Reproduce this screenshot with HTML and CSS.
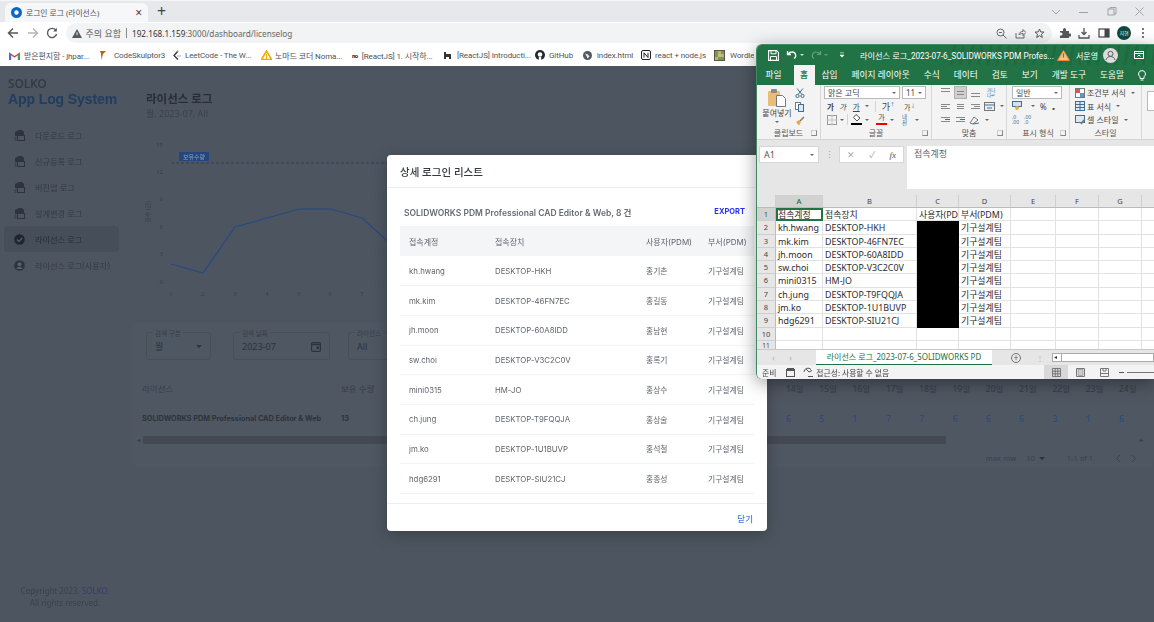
FILE: index.html
```html
<!DOCTYPE html>
<html lang="ko">
<head>
    <meta charset="UTF-8">
    <title>로그인 로그 (라이선스)</title>
    <link rel="stylesheet" href="styles.css">
</head>
<body>
    <!-- Browser chrome -->
    <header class="chrome">
        <div class="tabstrip">
            <div class="tab">
                <svg class="ico" width="11" height="11" viewBox="0 0 11 11"><circle cx="5.5" cy="5.5" r="5.5" fill="#0a66c8"/><circle cx="5.5" cy="5.5" r="2.2" fill="#fff"/></svg>
                <span class="tab-title">로그인 로그 (라이선스)</span>
                <span class="tab-close">×</span>
            </div>
            <span class="tab-new">+</span>
            <div class="win-ctrl">
                <svg width="12" height="12" viewBox="0 0 12 12"><path d="M2 4l4 4 4-4" fill="none" stroke="#a0a2a6"/></svg>
                <svg width="12" height="12" viewBox="0 0 12 12"><path d="M1 6.5h9" stroke="#a0a2a6"/></svg>
                <svg width="12" height="12" viewBox="0 0 12 12"><rect x="2" y="3" width="6" height="6" fill="none" stroke="#a0a2a6"/><path d="M4 3V1.500h6V8H8" fill="none" stroke="#a0a2a6"/></svg>
                <svg width="12" height="12" viewBox="0 0 12 12"><path d="M1.500 1.500l8 8m0-8l-8 8" stroke="#a0a2a6"/></svg>
            </div>
        </div>
        <div class="toolbar">
            <svg class="nav-btn" width="12" height="12" viewBox="0 0 12 12"><path d="M11 6H2M6 1.500L1.500 6 6 10.500" fill="none" stroke="#55585d" stroke-width="1.500"/></svg>
            <svg class="nav-btn" width="12" height="12" viewBox="0 0 12 12"><path d="M1 6h9M6 1.500L10.500 6 6 10.500" fill="none" stroke="#b4b6ba" stroke-width="1.500"/></svg>
            <svg class="nav-btn" width="12" height="12" viewBox="0 0 12 12"><path d="M10 3.500A4.600 4.600 0 1 0 10.600 7" fill="none" stroke="#55585d" stroke-width="1.400"/><path d="M10.800 .8v3.600H7.200z" fill="#55585d"/></svg>
            <div class="omnibox">
                <svg width="10" height="9" viewBox="0 0 10 9"><path d="M5 0l5 9H0z" fill="#55585d"/><path d="M5 3.200v3" stroke="#f1f3f4"/></svg>
                <span class="omni-warn">주의 요함</span>
                <span class="omni-sep"></span>
                <span class="omni-url"><b>192.168.1.159</b>:3000/dashboard/licenselog</span>
                <span class="omni-icons">
                    <svg width="11" height="11" viewBox="0 0 11 11"><circle cx="4.500" cy="4.500" r="3.500" fill="none" stroke="#66696e"/><path d="M7 7l3.500 3.500M3 4.500h3" stroke="#66696e"/></svg>
                    <svg width="11" height="11" viewBox="0 0 11 11"><path d="M1 5v5h8V7M4 7c0-2.500 2-3.500 4-3.500V1.500l3 3-3 3V5.500C6 5.500 5 6 4 7z" fill="none" stroke="#66696e"/></svg>
                    <svg width="11" height="11" viewBox="0 0 11 11"><path d="M5.500 1l1.300 3h3.200L7.500 6.200l.8 3.300-2.800-1.800-2.800 1.800.8-3.300L1 4h3.200z" fill="none" stroke="#55585d"/></svg>
                </span>
            </div>
            <div class="tool-icons">
                <svg width="12" height="12" viewBox="0 0 12 12"><path d="M1 4h3V2.500a1.500 1.500 0 0 1 3 0V4h3v2.500H11a1.500 1.500 0 0 1 0 3h-1V11H1V8.500h1a1.500 1.500 0 0 0 0-3H1z" fill="#55585d"/></svg>
                <svg width="12" height="12" viewBox="0 0 12 12"><path d="M6 1v6M3.500 5L6 7.500 8.500 5M1 8v3h10V8" fill="none" stroke="#55585d" stroke-width="1.300"/></svg>
                <svg width="12" height="12" viewBox="0 0 12 12"><rect x="1" y="2" width="10" height="8" fill="none" stroke="#44474c" stroke-width="1.200"/><rect x="6.500" y="2" width="4.500" height="8" fill="#44474c"/></svg>
                <span class="avatar">지현</span>
                <svg class="kebab" width="4" height="12" viewBox="0 0 4 12"><circle cx="2" cy="2" r="1.100" fill="#55585d"/><circle cx="2" cy="6" r="1.100" fill="#55585d"/><circle cx="2" cy="10" r="1.100" fill="#55585d"/></svg>
            </div>
        </div>
        <nav class="bookmarks">
            <a class="bm bm-mail"><svg width="11" height="9" viewBox="0 0 10 8"><path d="M0 1l5 3.500L10 1v1.500L5 6 0 2.500z" fill="#d8453a"/><path d="M8 8V3.300L10 1.500V8z" fill="#3a9d54"/><path d="M0 8V1.500l2 1.800V8z" fill="#4073d9"/></svg>받은편지함 - jhpar...</a>
            <a class="bm bm-cs"><svg width="8" height="10" viewBox="0 0 8 10"><path d="M1 1h6L4 4 2.500 10 2 4z" fill="#b5651d"/></svg>CodeSkulptor3</a>
            <a class="bm bm-lc"><svg width="9" height="11" viewBox="0 0 9 11"><path d="M6 1L2 5.500 6 9.500" fill="none" stroke="#333" stroke-width="1.300"/><path d="M5 6h4" stroke="#aaa"/><path d="M5 1.500L6 .5" stroke="#e8a33d" stroke-width="1.500"/></svg>LeetCode - The W...</a>
            <a class="bm bm-nomad"><svg width="11" height="10" viewBox="0 0 11 10"><path d="M5.500 1L10.500 9.500H.5z" fill="none" stroke="#f2a900" stroke-width="1.500"/><path d="M5.500 4v5" stroke="#f2a900"/></svg>노마드 코더 Noma...</a>
            <a class="bm bm-no"><b class="no-mark">no</b>[ReactJS] 1. 시작하...</a>
            <a class="bm bm-intro"><svg width="7" height="8" viewBox="0 0 7 8"><path d="M0 1h2v2h5v5H5V6H2v2H0z" fill="#333"/></svg>[ReactJS] Introducti...</a>
            <a class="bm bm-gh"><svg width="10" height="10" viewBox="0 0 10 10"><circle cx="5" cy="5" r="5" fill="#24292e"/><circle cx="5" cy="4.500" r="2.300" fill="#fff"/><path d="M3.800 10V7h2.400v3z" fill="#fff"/></svg>GitHub</a>
            <a class="bm bm-idx"><svg width="9" height="9" viewBox="0 0 9 9"><circle cx="4.500" cy="4.500" r="4.500" fill="#55585d"/><path d="M2 2.500l3 1 1.500 2-2 2-1-2.500z" fill="#eee"/></svg>index.html</a>
            <a class="bm bm-not"><svg width="10" height="10" viewBox="0 0 10 10"><rect x=".5" y=".5" width="9" height="9" rx="1.500" fill="#fff" stroke="#222"/><path d="M3 2.800v4.700M7 2.800v4.700M3 2.800l4 4.700" stroke="#222"/></svg>react + node.js</a>
            <a class="bm bm-wd"><span class="wordle-mark"><i></i><i></i><i></i><i></i><i></i><i></i><i></i><i></i><i></i></span>Wordle</a>
        </nav>
    </header>

    <!-- Dimmed app behind the dialog -->
    <div class="app">
        <aside class="sidebar">
            <div class="logo">
                <div class="logo-top">SOLKO</div>
                <div class="logo-sub">App Log System</div>
            </div>
            <ul class="menu">
                <li><svg class="menu-ico" width="11" height="12" viewBox="0 0 11 12"><path d="M1 3l4-2h3l2 2v4H1z" fill="#2d343e"/><rect x="3.500" y="6.500" width="7" height="5" fill="none" stroke="#2d343e"/><path d="M.5 9h2M.5 11h2" stroke="#2d343e"/></svg>다운로드 로그</li>
                <li><svg class="menu-ico" width="11" height="12" viewBox="0 0 11 12"><path d="M1 3l4-2h3l2 2v4H1z" fill="#2d343e"/><rect x="3.500" y="6.500" width="7" height="5" fill="none" stroke="#2d343e"/><path d="M.5 9h2M.5 11h2" stroke="#2d343e"/></svg>신규등록 로그</li>
                <li><svg class="menu-ico" width="11" height="12" viewBox="0 0 11 12"><path d="M1 3l4-2h3l2 2v4H1z" fill="#2d343e"/><rect x="3.500" y="6.500" width="7" height="5" fill="none" stroke="#2d343e"/><path d="M.5 9h2M.5 11h2" stroke="#2d343e"/></svg>버전업 로그</li>
                <li><svg class="menu-ico" width="11" height="12" viewBox="0 0 11 12"><path d="M1 3l4-2h3l2 2v4H1z" fill="#2d343e"/><rect x="3.500" y="6.500" width="7" height="5" fill="none" stroke="#2d343e"/><path d="M.5 9h2M.5 11h2" stroke="#2d343e"/></svg>설계변경 로그</li>
                <li class="active"><svg class="menu-ico" width="11" height="11" viewBox="0 0 11 11"><circle cx="5.500" cy="5.500" r="5.300" fill="#20262e"/><path d="M3 5.500l2 2 3.200-3.500" fill="none" stroke="#59616c" stroke-width="1.200"/></svg>라이선스 로그</li>
                <li><svg class="menu-ico" width="11" height="11" viewBox="0 0 11 11"><circle cx="5.500" cy="5.500" r="5.300" fill="#2d343e"/><circle cx="5.500" cy="4.300" r="2" fill="#59616c"/><path d="M2.500 9c.5-1.600 1.700-2.300 3-2.300s2.500.7 3 2.300z" fill="#59616c"/></svg>라이선스 로그(사용자)</li>
            </ul>
            <div class="copy">Copyright 2023. <span>SOLKO.</span><br>All rights reserved.</div>
        </aside>
        <main class="content">
            <h1 class="page-title">라이선스 로그</h1>
            <p class="page-sub">월, 2023-07, All</p>
            <svg class="chart" width="260" height="170" viewBox="0 0 260 170">
                <g class="grid-lines">
                    <path d="M38 16H260M38 43H260M38 70H260M38 98H260M38 125H260M38 153H260"/>
                </g>
                <path class="limit" d="M38 35H260"/>
                <rect class="limit-tag" x="46" y="24" width="30" height="9" rx="1"/>
                <text class="limit-text" x="61" y="31" text-anchor="middle">보유수량</text>
                <g class="axis">
                    <text x="30" y="19" text-anchor="end">15</text>
                    <text x="30" y="46" text-anchor="end">12</text>
                    <text x="30" y="73" text-anchor="end">9</text>
                    <text x="30" y="101" text-anchor="end">6</text>
                    <text x="30" y="128" text-anchor="end">3</text>
                    <text x="30" y="156" text-anchor="end">0</text>
                    <text x="38" y="168" text-anchor="middle">1</text>
                    <text x="70" y="168" text-anchor="middle">2</text>
                    <text x="102" y="168" text-anchor="middle">3</text>
                    <text x="134" y="168" text-anchor="middle">4</text>
                    <text x="166" y="168" text-anchor="middle">5</text>
                    <text x="197" y="168" text-anchor="middle">6</text>
                    <text x="229" y="168" text-anchor="middle">7</text>
                    <text transform="translate(17 84) rotate(-90)" text-anchor="middle">횟수 (건)</text>
                </g>
                <path class="series" d="M38 136L70 145 102 99 134 90 166 81 198 81 229 90 260 118"/>
            </svg>
            <section class="card">
                <div class="filters">
                    <div class="field f-type"><label>검색 구분</label><span>월</span><em class="caret"></em></div>
                    <div class="field f-date"><label>검색 날짜</label><span>2023-07</span>
                        <svg width="10" height="11" viewBox="0 0 10 11"><rect x=".6" y="1.600" width="8.800" height="8.800" rx="1" fill="none" stroke="#2d343d" stroke-width="1.200"/><path d="M.6 3.500h8.800" stroke="#2d343d" stroke-width="1.500"/><rect x="5.500" y="5.500" width="2.500" height="2.500" fill="#2d343d"/></svg>
                    </div>
                    <div class="field f-lic"><label>라이선스</label><span>All</span></div>
                </div>
                <table class="log-table">
                    <colgroup>
                        <col class="c-name"><col class="c-qty"><col class="c-gap">
                        <col span="11" class="c-day">
                    </colgroup>
                    <thead>
                        <tr><th>라이선스</th><th>보유 수량</th><th></th><th>14일</th><th>15일</th><th>16일</th><th>17일</th><th>18일</th><th>19일</th><th>20일</th><th>21일</th><th>22일</th><th>23일</th><th>24일</th></tr>
                    </thead>
                    <tbody>
                        <tr><td class="lic-name">SOLIDWORKS PDM Professional CAD Editor &amp; Web</td><td class="lic-name">13</td><td></td><td>6</td><td>5</td><td>1</td><td>7</td><td>7</td><td>6</td><td>6</td><td>6</td><td>3</td><td>1</td><td>6</td></tr>
                    </tbody>
                </table>
                <div class="hscroll"><span class="hs-arrow">◂</span><div class="hs-thumb"></div><span class="hs-arrow">▸</span></div>
                <div class="pager">
                    <span>max row</span><span class="pg-size">10 <em class="caret"></em></span><span class="pg-range">1-1 of 1</span>
                    <svg width="6" height="9" viewBox="0 0 6 9"><path d="M5 1L1.500 4.500 5 8" fill="none" stroke="#3a424c"/></svg>
                    <svg width="6" height="9" viewBox="0 0 6 9"><path d="M1 1l3.500 3.500L1 8" fill="none" stroke="#3a424c"/></svg>
                </div>
            </section>
        </main>
    </div>

    <!-- Detail dialog -->
    <div class="modal">
        <div class="modal-title">상세 로그인 리스트</div>
        <div class="modal-body">
            <div class="modal-head">
                <span>SOLIDWORKS PDM Professional CAD Editor &amp; Web, 8 건</span>
                <a class="export">EXPORT</a>
            </div>
            <table class="detail-table">
                <colgroup><col class="d1"><col class="d2"><col class="d3"><col class="d4"></colgroup>
                <thead>
                    <tr><th>접속계정</th><th>접속장치</th><th>사용자(PDM)</th><th>부서(PDM)</th></tr>
                </thead>
                <tbody>
                    <tr><td>kh.hwang</td><td>DESKTOP-HKH</td><td>홍기촌</td><td>기구설계팀</td></tr>
                    <tr><td>mk.kim</td><td>DESKTOP-46FN7EC</td><td>홍길동</td><td>기구설계팀</td></tr>
                    <tr><td>jh.moon</td><td>DESKTOP-60A8IDD</td><td>홍남현</td><td>기구설계팀</td></tr>
                    <tr><td>sw.choi</td><td>DESKTOP-V3C2C0V</td><td>홍록기</td><td>기구설계팀</td></tr>
                    <tr><td>mini0315</td><td>HM-JO</td><td>홍상수</td><td>기구설계팀</td></tr>
                    <tr><td>ch.jung</td><td>DESKTOP-T9FQQJA</td><td>홍상술</td><td>기구설계팀</td></tr>
                    <tr><td>jm.ko</td><td>DESKTOP-1U1BUVP</td><td>홍석철</td><td>기구설계팀</td></tr>
                    <tr><td>hdg6291</td><td>DESKTOP-SIU21CJ</td><td>홍종성</td><td>기구설계팀</td></tr>
                </tbody>
            </table>
        </div>
        <div class="modal-foot"><a class="close-link">닫기</a></div>
    </div>

    <!-- Excel window on top -->
    <div class="excel">
        <div class="xl-title">
            <div class="xl-pattern"></div>
            <svg class="xl-save" width="11" height="11" viewBox="0 0 11 11"><path d="M.6.6h8l1.800 1.800v8H.6z" fill="none" stroke="#fff" stroke-width="1.100"/><path d="M3 .8v3h5v-3M2.500 10V6.500h6V10" fill="none" stroke="#fff"/></svg>
            <svg class="xl-undo" width="12" height="10" viewBox="0 0 12 10"><path d="M1.500 1v3.500H5M2 4.200C3 2.800 4.500 2 6 2a3.500 3.500 0 0 1 2 6.500" fill="none" stroke="#fff" stroke-width="1.300"/></svg>
            <em class="xl-drop"></em>
            <svg class="xl-redo" width="12" height="10" viewBox="0 0 12 10"><path d="M10.500 1v3.500H7M10 4.200C9 2.800 7.500 2 6 2a3.500 3.500 0 0 0-2 6.500" fill="none" stroke="#66a080" stroke-width="1.200"/></svg>
            <em class="xl-drop dim"></em>
            <svg class="xl-custom" width="6" height="6" viewBox="0 0 6 6"><path d="M1 .8h4M1 3h4L3 5.200z" fill="#fff" stroke="#fff" stroke-width=".6"/></svg>
            <span class="xl-file">라이선스 로그_2023-07-6_SOLIDWORKS PDM Profes...</span>
            <svg class="xl-warn" width="13" height="11" viewBox="0 0 13 11"><path d="M6.500 .5l6 10H.5z" fill="#f6c08a" stroke="#e68a2e"/><path d="M6.500 3.500v4" stroke="#b3541e" stroke-width="1.200"/></svg>
            <span class="xl-user">서운영</span>
            <svg class="xl-avatar" width="15" height="15" viewBox="0 0 15 15"><circle cx="7.500" cy="7.500" r="7.500" fill="#dcdcdc"/><circle cx="7.500" cy="5.800" r="2.500" fill="none" stroke="#5c5c5c"/><path d="M3 12c.6-2.500 2.500-3.500 4.500-3.500S11.400 9.500 12 12" fill="none" stroke="#5c5c5c"/></svg>
            <svg class="xl-display" width="10" height="8" viewBox="0 0 10 8"><rect x=".5" y=".5" width="9" height="7" fill="none" stroke="#fff"/><path d="M.5 2.500h9M3.500 5.500L5 4l1.500 1.500" fill="none" stroke="#fff"/></svg>
        </div>
        <div class="xl-tabs">
            <span>파일</span><span class="on">홈</span><span>삽입</span><span>페이지 레이아웃</span><span>수식</span><span>데이터</span><span>검토</span><span>보기</span><span>개발 도구</span><span>도움말</span>
            <svg class="xl-bulb" width="8" height="11" viewBox="0 0 8 11"><path d="M4 .6a3.400 3.400 0 0 1 2 6.200V8.500H2V6.800A3.400 3.400 0 0 1 4 .6zM2.500 10h3" fill="none" stroke="#fff"/></svg>
        </div>
        <div class="ribbon">
            <div class="rb-group g-clip">
                <div class="rb-main clip-main">
                    <div class="paste">
                        <svg width="20" height="18" viewBox="0 0 20 18"><rect x="1" y="2" width="12" height="15" rx="1" fill="#e9bd77"/><rect x="4" y="0" width="6" height="4" rx="1" fill="#8a8a8a"/><path d="M9.500 6.500h6l3 3v8h-9z" fill="#fff" stroke="#777"/></svg>
                        <span>붙여넣기</span><em class="xl-caret"></em>
                    </div>
                    <div class="clip-tools">
                        <svg width="10" height="10" viewBox="0 0 10 10"><path d="M2 .5l5 6M8 .5l-5 6" stroke="#3f6e96"/><circle cx="2.500" cy="8" r="1.600" fill="none" stroke="#3f6e96"/><circle cx="7.500" cy="8" r="1.600" fill="none" stroke="#3f6e96"/></svg>
                        <svg width="12" height="10" viewBox="0 0 12 10"><rect x=".5" y=".5" width="5" height="7" fill="#fff" stroke="#777"/><rect x="3.500" y="2.500" width="5" height="7" fill="#dce8f3" stroke="#3f6e96"/></svg>
                        <svg width="10" height="10" viewBox="0 0 10 10"><path d="M5 5l4-4" stroke="#777" stroke-width="1.500"/><path d="M1 6l3-2 2 2-2 3.500z" fill="#dfa94c"/></svg>
                    </div>
                </div>
                <div class="rb-label">클립보드<i class="launch"></i></div>
            </div>
            <div class="rb-group g-font">
                <div class="rb-main font-main">
                    <div class="rb-row"><span class="select sel-font">맑은 고딕<em class="xl-caret"></em></span><span class="select sel-size">11<em class="xl-caret"></em></span></div>
                    <div class="rb-row r2"><b>가</b><i>가</i><u>가</u><em class="xl-caret"></em><span class="rb-sep"></span><span class="big">가<sup>↑</sup></span><span class="small">가<sup>↓</sup></span></div>
                    <div class="rb-row r3">
                        <svg width="10" height="10" viewBox="0 0 10 10"><rect x=".5" y=".5" width="9" height="9" fill="none" stroke="#9a9a9a"/><path d="M5 .5v9M.5 5h9" stroke="#c6c6c6"/></svg><em class="xl-caret"></em><span class="rb-sep"></span>
                        <span class="color-btn black"><svg width="10" height="7" viewBox="0 0 10 7"><path d="M4 .5l4 3.500-3 3-3.500-3.500z" fill="#fff" stroke="#555"/></svg></span><em class="xl-caret"></em>
                        <span class="color-btn red">가</span><em class="xl-caret"></em><span class="phon">내천</span><em class="xl-caret"></em>
                    </div>
                </div>
                <div class="rb-label">글꼴<i class="launch"></i></div>
            </div>
            <div class="rb-group g-align">
                <div class="rb-main align-main">
                    <div class="rb-row">
                        <span class="al"><s></s><s></s></span><span class="al on mid"><s></s><s></s></span><span class="al bot"><s></s><s></s></span><span class="wrap">가나<br>다↵</span>
                    </div>
                    <div class="rb-row">
                        <span class="al h l"><s></s><s></s><s></s></span><span class="al h c"><s></s><s></s><s></s></span><span class="al h r"><s></s><s></s><s></s></span>
                        <svg width="11" height="9" viewBox="0 0 11 9"><rect x=".5" y=".5" width="10" height="8" fill="#eee" stroke="#777"/><path d="M.5 3h10M3 6h5" stroke="#3f6e96"/></svg><em class="xl-caret"></em>
                    </div>
                    <div class="rb-row">
                        <span class="al h ind"><s></s><s></s><s></s></span><span class="al h ind"><s></s><s></s><s></s></span>
                        <svg width="11" height="10" viewBox="0 0 11 10"><path d="M1 8l4-6 4 3-5 4z" fill="none" stroke="#777"/><path d="M4 9l6-1" stroke="#3f6e96"/></svg><em class="xl-caret"></em>
                    </div>
                </div>
                <div class="rb-label">맞춤<i class="launch"></i></div>
            </div>
            <div class="rb-group g-num">
                <div class="rb-main num-main">
                    <div class="rb-row"><span class="select sel-num">일반<em class="xl-caret"></em></span></div>
                    <div class="rb-row">
                        <svg width="11" height="10" viewBox="0 0 11 10"><rect x=".5" y=".5" width="9" height="5" fill="#cfe3f5" stroke="#3f6e96"/><circle cx="5" cy="7" r="2" fill="#e3b23c"/></svg><em class="xl-caret"></em><span class="pct">%</span><span class="pct">❟</span>
                    </div>
                    <div class="rb-row num-inc"><span>.0<br>.00</span><span>.00<br>.0</span></div>
                </div>
                <div class="rb-label">표시 형식<i class="launch"></i></div>
            </div>
            <div class="rb-group g-style">
                <div class="rb-main style-main">
                    <div class="sty"><svg width="10" height="10" viewBox="0 0 10 10"><rect x=".5" y=".5" width="9" height="9" fill="#fff" stroke="#777"/><rect x="1" y="1" width="4" height="4" fill="#d55"/><rect x="5" y="5" width="4" height="4" fill="#59c"/></svg>조건부 서식<em class="xl-caret"></em></div>
                    <div class="sty"><svg width="10" height="10" viewBox="0 0 10 10"><rect x=".5" y=".5" width="9" height="9" fill="#dce8f3" stroke="#3f6e96"/><path d="M.5 3.500h9M.5 6.500h9M5 .5v9" stroke="#3f6e96"/></svg>표 서식<em class="xl-caret"></em></div>
                    <div class="sty"><svg width="10" height="10" viewBox="0 0 10 10"><rect x=".5" y=".5" width="9" height="7" fill="#dce8f3" stroke="#3f6e96"/><path d="M6 9l3-4" stroke="#777" stroke-width="1.500"/></svg>셀 스타일<em class="xl-caret"></em></div>
                </div>
                <div class="rb-label">스타일</div>
            </div>
            <div class="rb-group g-more"><span class="more-box"></span></div>
        </div>
        <div class="formula">
            <div class="name-box">A1<em class="xl-caret"></em></div>
            <span class="fx-dots">⋮</span>
            <div class="fx-btns"><span>✕</span><span>✓</span><i>fx</i></div>
            <div class="fx-input">접속계정</div>
        </div>
        <div class="sheet">
            <div class="col-heads">
                <span class="corner"></span><span class="sel">A</span><span>B</span><span>C</span><span>D</span><span>E</span><span>F</span><span>G</span><span></span>
            </div>
            <div class="cells">
                <span class="rh sel">1</span><span class="cur">접속계정</span><span>접속장치</span><span class="nowrap">사용자(PD</span><span>부서(PDM)</span><span></span><span></span><span></span><span></span>
                <span class="rh">2</span><span>kh.hwang</span><span>DESKTOP-HKH</span><span class="blk"></span><span>기구설계팀</span><span></span><span></span><span></span><span></span>
                <span class="rh">3</span><span>mk.kim</span><span>DESKTOP-46FN7EC</span><span class="blk"></span><span>기구설계팀</span><span></span><span></span><span></span><span></span>
                <span class="rh">4</span><span>jh.moon</span><span>DESKTOP-60A8IDD</span><span class="blk"></span><span>기구설계팀</span><span></span><span></span><span></span><span></span>
                <span class="rh">5</span><span>sw.choi</span><span>DESKTOP-V3C2C0V</span><span class="blk"></span><span>기구설계팀</span><span></span><span></span><span></span><span></span>
                <span class="rh">6</span><span>mini0315</span><span>HM-JO</span><span class="blk"></span><span>기구설계팀</span><span></span><span></span><span></span><span></span>
                <span class="rh">7</span><span>ch.jung</span><span>DESKTOP-T9FQQJA</span><span class="blk"></span><span>기구설계팀</span><span></span><span></span><span></span><span></span>
                <span class="rh">8</span><span>jm.ko</span><span>DESKTOP-1U1BUVP</span><span class="blk"></span><span>기구설계팀</span><span></span><span></span><span></span><span></span>
                <span class="rh">9</span><span>hdg6291</span><span>DESKTOP-SIU21CJ</span><span class="blk"></span><span>기구설계팀</span><span></span><span></span><span></span><span></span>
                <span class="rh">10</span><span></span><span></span><span></span><span></span><span></span><span></span><span></span><span></span>
                <span class="rh last">11</span><span></span><span></span><span></span><span></span><span></span><span></span><span></span><span></span>
            </div>
        </div>
        <div class="sheet-tabs">
            <span class="st-nav">‹</span><span class="st-nav">›</span>
            <span class="st-tab">라이선스 로그_2023-07-6_SOLIDWORKS PD</span>
            <span class="st-add">+</span>
            <span class="st-dots">⋮</span>
            <div class="st-scroll"><span>◂</span></div>
        </div>
        <div class="status">
            <span class="ready">준비</span>
            <svg class="st-macro" width="9" height="9" viewBox="0 0 9 9"><rect x=".5" y="1.500" width="8" height="7" fill="none" stroke="#555"/><rect x="1" y="0" width="7" height="3" fill="#555"/></svg>
            <svg class="st-acc" width="11" height="10" viewBox="0 0 11 10"><path d="M1 5a4 4 0 0 1 7-2.500M5 9.500h5M3 2l3 3 3-1.500" fill="none" stroke="#555"/></svg>
            <span>접근성: 사용할 수 없음</span>
            <div class="view-btns">
                <span class="on"><svg width="9" height="9" viewBox="0 0 9 9"><path d="M.5.500h8v8h-8zM3.200.5v8M5.800.5v8M.5 3.200h8M.5 5.800h8" fill="none" stroke="#555" stroke-width=".7"/></svg></span>
                <span><svg width="9" height="9" viewBox="0 0 9 9"><path d="M.5.500h8v8h-8z" fill="none" stroke="#777"/><rect x="2" y="1.500" width="5" height="6" fill="#ccc" stroke="#777" stroke-width=".5"/></svg></span>
                <span><svg width="9" height="9" viewBox="0 0 9 9"><path d="M.5.500h8v8h-8zM.5 5.500h8M3 .5v2.500h3V.5" fill="none" stroke="#777"/></svg></span>
            </div>
            <span class="zoom-minus"></span><span class="zoom-track"></span>
        </div>
    </div>
</body>
</html>
```

FILE: styles.css
```css
/* Basic reset */
* {
    box-sizing: border-box;
    margin: 0;
    padding: 0;
}
html, body {
    width: 1154px;
    height: 622px;
    overflow: hidden;
}
body {
    position: relative;
    font-family: "Noto Sans", "Noto Sans CJK KR", sans-serif;
    background-color: #4d5560;
    color: #333;
}
em, i {
    font-style: normal;
}
svg {
    flex: none;
}

/* Browser chrome */
.chrome {
    height: 66px;
    background: #fff;
}
.tabstrip {
    display: flex;
    align-items: flex-end;
    height: 22px;
    background: #e7e8eb;
    border-top: 1px solid #f5f5f5;
    padding-left: 5px;
}
.tab {
    display: flex;
    align-items: center;
    width: 143px;
    height: 19px;
    padding: 0 6px;
    gap: 4px;
    background: #f6f7f8;
    border-radius: 6px 6px 0 0;
    font-size: 7.800px;
    color: #555;
}
.tab-title {
    flex: 1;
}
.tab-close {
    font-size: 12px;
    color: #444;
}
.tab-new {
    margin: 0 0 1px 9px;
    font-size: 16px;
    line-height: 19px;
    color: #444;
}
.win-ctrl {
    display: flex;
    align-items: center;
    gap: 16px;
    margin-left: auto;
    height: 20px;
    padding-right: 8px;
}
.toolbar {
    display: flex;
    align-items: center;
    height: 22px;
    padding-left: 7px;
}
.nav-btn {
    margin-right: 7.500px;
}
.omnibox {
    display: flex;
    align-items: center;
    width: 986px;
    height: 20px;
    padding: 0 7px 0 6px;
    background: #f1f3f4;
    border-radius: 10px;
    font-size: 9px;
    color: #666;
}
.omni-warn {
    margin-left: 4px;
    color: #5a5d62;
}
.omni-sep {
    width: 1px;
    height: 10px;
    margin: 0 5px;
    background: #888;
}
.omni-url {
    font-size: 8.200px;
}
.omni-url b {
    font-weight: 400;
    color: #333;
}
.omni-icons {
    display: flex;
    gap: 8px;
    margin-left: auto;
}
.tool-icons {
    display: flex;
    align-items: center;
    gap: 7.500px;
    margin-left: 7px;
}
.kebab {
    margin-left: 2px;
}
.avatar {
    width: 14px;
    height: 14px;
    border-radius: 50%;
    background: #0d4a40;
    color: #fff;
    font-size: 5px;
    line-height: 14px;
    text-align: center;
}
.bookmarks {
    display: flex;
    align-items: center;
    height: 22px;
    padding-left: 9px;
    font-family: "Roboto", "Noto Sans CJK KR", sans-serif;
    font-size: 8px;
    letter-spacing: -.1px;
    color: #50535a;
    white-space: nowrap;
    overflow: hidden;
}
.bm {
    display: flex;
    align-items: center;
    flex: none;
    gap: 4px;
    overflow: hidden;
}
.bm-mail { width: 90px; }
.bm-cs { width: 73px; gap: 7px; }
.bm-lc { width: 89px; }
.bm-nomad { width: 91px; gap: 3px; }
.bm-no { width: 92px; }
.bm-intro { width: 91px; gap: 6px; }
.bm-gh { width: 48px; }
.bm-idx { width: 58px; gap: 5px; }
.bm-not { width: 73px; }
.bm-wd { width: 40px; gap: 5px; }
.no-mark {
    font-size: 6px;
    letter-spacing: -.5px;
    color: #222;
}
.wordle-mark {
    display: grid;
    grid-template-columns: repeat(3, 3px);
    grid-auto-rows: 3px;
    gap: 0;
    border: 1px solid #555;
}
.wordle-mark i {
    background: #7a9a4a;
}
.wordle-mark i:nth-child(2), .wordle-mark i:nth-child(6), .wordle-mark i:nth-child(7) {
    background: #c9b458;
}
.wordle-mark i:nth-child(5) {
    background: #bbb;
}

/* Dimmed app */
.app {
    display: flex;
    height: 556px;
    filter: blur(.4px);
}
.sidebar {
    position: relative;
    width: 133px;
    flex: none;
    padding: 12px 4px 0;
}
.logo {
    padding-left: 4px;
}
.logo-top {
    font-size: 12px;
    line-height: 12px;
    font-weight: 600;
    color: #333b46;
    letter-spacing: -.2px;
}
.logo-sub {
    font-size: 14px;
    line-height: 18px;
    font-weight: 700;
    font-family: "Liberation Sans", sans-serif;
    color: #213d60;
    white-space: nowrap;
    letter-spacing: -.1px;
}
.menu {
    list-style: none;
    margin-top: 14px;
}
.menu li {
    display: flex;
    align-items: center;
    width: 115px;
    height: 26px;
    padding-left: 10px;
    gap: 10px;
    font-size: 8.200px;
    color: #343b45;
    border-radius: 4px;
    white-space: nowrap;
}
.menu li.active {
    background: #464e59;
    color: #272e37;
}
.copy {
    position: absolute;
    left: 0;
    right: 3px;
    top: 519px;
    font-size: 8px;
    line-height: 12px;
    text-align: center;
    color: #3a424c;
}
.copy span {
    color: #3d3a66;
}
.content {
    flex: 1;
    min-width: 0;
    padding-top: 25px;
}
.page-title {
    margin-left: 13px;
    font-size: 11.500px;
    line-height: 16px;
    color: #272e38;
}
.page-sub {
    margin-left: 13px;
    font-size: 9px;
    line-height: 14px;
    color: #3a424c;
}
.chart {
    display: block;
    margin-top: 7px;
}
.grid-lines path {
    stroke: #4a525c;
    stroke-width: 1;
    stroke-dasharray: 1 3;
}
.limit {
    stroke: #333f52;
    stroke-dasharray: 3 2;
}
.limit-tag {
    fill: #24467f;
}
.limit-text {
    font-size: 6px;
    fill: #8fa2bd;
}
.axis text {
    font-size: 6px;
    fill: #38404a;
}
.series {
    fill: none;
    stroke: #254a84;
    stroke-width: 1.200;
}
.card {
    position: relative;
    margin-top: 25px;
    height: 144px;
    background: #4f5762;
    border-radius: 6px;
    padding-top: 9px;
}
.filters {
    display: flex;
    height: 28px;
    margin-left: 13px;
}
.field {
    position: relative;
    display: flex;
    align-items: center;
    justify-content: space-between;
    height: 28px;
    padding: 0 8px;
    border: 1px solid #474f59;
    border-radius: 3px;
    font-size: 9px;
    color: #2d343d;
}
.field label {
    position: absolute;
    top: -5px;
    left: 6px;
    padding: 0 2px;
    background: #4f5762;
    font-size: 6.500px;
    color: #363e48;
}
.f-type { width: 65px; }
.f-date { width: 97px; margin-left: 22px; }
.f-lic { width: 80px; margin-left: 18px; }
.caret {
    display: inline-block;
    border: 3px solid transparent;
    border-top-color: #2d343d;
    border-bottom: 0;
}
.log-table {
    width: 1019.300px;
    margin-top: 12px;
    border-collapse: collapse;
    table-layout: fixed;
    font-size: 8.500px;
}
.c-name { width: 208px; }
.c-qty { width: 50px; }
.c-gap { width: 395px; }
.c-day { width: 33.300px; }
.log-table th {
    height: 32px;
    font-weight: 400;
    text-align: left;
    color: #363e48;
    padding-left: 0;
    white-space: nowrap;
}
.log-table th:first-child, .log-table td:first-child {
    padding-left: 9px;
}
.log-table td {
    height: 32px;
    padding-bottom: 3px;
    color: #254a84;
    white-space: nowrap;
}
.log-table td.lic-name {
    font-family: "Inter", "Liberation Sans", sans-serif;
    font-size: 7.300px;
    font-weight: 700;
    color: #2d343d;
}
.hscroll {
    display: flex;
    align-items: center;
    height: 8px;
    font-size: 6px;
    color: #333a44;
}
.hs-arrow {
    width: 10px;
    text-align: center;
}
.hs-arrow:last-child {
    margin-left: 190px;
}
.hs-thumb {
    width: 803px;
    height: 8px;
    background: #434a54;
}
.pager {
    display: flex;
    justify-content: flex-end;
    align-items: center;
    gap: 10px;
    height: 12px;
    margin-top: 8px;
    padding-right: 17px;
    font-size: 7.500px;
    color: #3a424c;
}
.pg-range {
    margin: 0 12px 0 12px;
}
.pg-size .caret {
    margin-left: 2px;
    vertical-align: middle;
}

/* Detail dialog */
.modal {
    position: absolute;
    left: 387px;
    top: 155px;
    width: 380px;
    height: 376px;
    display: flex;
    flex-direction: column;
    background: #fff;
    border-radius: 4px;
    box-shadow: 0 4px 16px rgba(0, 0, 0, .25);
    font-family: "Inter", "Noto Sans CJK KR", sans-serif;
}
.modal-title {
    height: 33px;
    padding: 9px 13px 0;
    font-size: 10.500px;
    font-weight: 500;
    color: #333a42;
    border-bottom: 1px solid #edeef0;
}
.modal-body {
    flex: 1;
    padding: 0 13px;
}
.modal-head {
    display: flex;
    justify-content: space-between;
    align-items: center;
    height: 38px;
    padding: 9px 9px 0 4px;
    font-size: 8.500px;
    font-weight: 600;
    color: #666c75;
}
.export {
    font-size: 7.500px;
    font-weight: 700;
    color: #2a30f0;
}
.detail-table {
    width: 354px;
    border-collapse: collapse;
    table-layout: fixed;
    font-size: 7.800px;
    color: #5f656e;
}
.d1 { width: 95px; }
.d2 { width: 151px; }
.d3 { width: 62px; }
.d4 { width: 46px; }
.detail-table th {
    height: 30px;
    background: #f4f5f7;
    font-size: 8px;
    font-weight: 400;
    text-align: left;
    color: #5f656e;
    white-space: nowrap;
}
.detail-table th:first-child, .detail-table td:first-child {
    padding-left: 9px;
}
.detail-table td {
    height: 29.700px;
    border-bottom: 1px solid #f2f3f4;
    white-space: nowrap;
}
.modal-foot {
    display: flex;
    justify-content: flex-end;
    align-items: center;
    height: 28px;
    padding-right: 14px;
    border-top: 1px solid #edeef0;
    font-size: 8.500px;
}
.close-link {
    color: #3d7de0;
    font-weight: 500;
}

/* Excel window */
.excel {
    position: absolute;
    left: 756px;
    top: 44px;
    width: 398px;
    height: 335px;
    display: flex;
    flex-direction: column;
    background: #e6e6e6;
    border: 1px solid #3f8a62;
    border-right: 0;
    border-radius: 6px 0 0 6px;
    box-shadow: 0 4px 18px rgba(0, 0, 0, .38);
    font-family: "Noto Sans", "Noto Sans CJK KR", sans-serif;
    color: #333;
}
.xl-title {
    position: relative;
    display: flex;
    align-items: center;
    flex: none;
    height: 20px;
    background: #217346;
    color: #fff;
    font-family: "Roboto", "Noto Sans CJK KR", sans-serif;
    font-size: 8.200px;
    border-radius: 5px 0 0 0;
    overflow: hidden;
}
.xl-pattern {
    position: absolute;
    top: 0;
    left: 190px;
    width: 210px;
    height: 40px;
    background: repeating-linear-gradient(100deg, transparent 0 6px, rgba(0, 0, 0, .07) 6px 9px);
}
.xl-save { margin-left: 11px; position: relative; }
.xl-undo { margin-left: 7px; position: relative; }
.xl-drop {
    margin-left: 2px;
    border: 2px solid transparent;
    border-top-color: #cfe0d7;
    border-bottom: 0;
}
.xl-drop.dim { border-top-color: #66a080; }
.xl-redo { margin-left: 6px; }
.xl-custom { margin-left: 11px; }
.xl-file { margin-left: 15px; width: 197px; flex: none; white-space: nowrap; position: relative; }
.xl-warn { position: relative; }
.xl-user { margin-left: 6px; flex: none; white-space: nowrap; font-size: 8px; position: relative; }
.xl-avatar { margin-left: 5px; position: relative; }
.xl-display { margin-left: 16px; position: relative; }
.xl-tabs {
    display: flex;
    align-items: center;
    flex: none;
    height: 20px;
    padding-left: 1.500px;
    background: #217346;
    color: #fff;
    font-size: 8.700px;
}
.xl-tabs span {
    padding: 0 7px;
    line-height: 20px;
    white-space: nowrap;
}
.xl-tabs span.on {
    margin-left: 5px;
    padding: 0 6.500px;
    background: #f3f3f3;
    color: #217346;
    font-weight: 500;
}
.xl-bulb { margin-left: 7px; }
.ribbon {
    display: flex;
    flex: none;
    height: 55px;
    background: #f3f3f3;
    border-bottom: 1px solid #d4d4d4;
    font-size: 8px;
    color: #444;
}
.rb-group {
    display: flex;
    flex-direction: column;
    flex: none;
    border-right: 1px solid #d8d8d8;
    padding: 1px 2px 0;
}
.g-clip { width: 64px; }
.g-font { width: 111px; }
.g-align { width: 75px; }
.g-num { width: 63px; }
.g-style { width: 72px; }
.g-more { border-right: 0; padding-top: 6px; }
.rb-main {
    flex: 1;
    min-height: 0;
}
.rb-label {
    position: relative;
    flex: none;
    height: 13px;
    line-height: 13px;
    font-size: 8px;
    text-align: center;
    color: #555;
}
.launch {
    position: absolute;
    right: 1px;
    top: 4px;
    width: 6px;
    height: 6px;
    border: 1px solid #888;
    border-top-color: #ccc;
    border-left-color: #ccc;
}
.xl-caret {
    display: inline-block;
    flex: none;
    margin-left: 3px;
    border: 2px solid transparent;
    border-top-color: #666;
    border-bottom: 0;
}
.clip-main {
    display: flex;
    padding-left: 2px;
}
.paste {
    display: flex;
    flex-direction: column;
    align-items: center;
    width: 32px;
    font-size: 8px;
    white-space: nowrap;
    padding-top: 3px;
}
.paste span {
    margin-top: 0;
    line-height: 11px;
}
.paste .xl-caret {
    margin: 3px 0 0;
}
.clip-tools {
    display: flex;
    flex-direction: column;
    gap: 4px;
    margin-left: 2px;
    padding-top: 2px;
}
.rb-row {
    display: flex;
    align-items: center;
    height: 13.500px;
}
.select {
    display: flex;
    align-items: center;
    justify-content: space-between;
    height: 13px;
    padding: 0 3px;
    background: #fff;
    border: 1px solid #b9b9b9;
    font-size: 8px;
    white-space: nowrap;
}
.sel-font { width: 76px; margin-left: 1px; }
.sel-size { width: 24px; margin-left: 2px; }
.sel-num { width: 50px; margin-left: 3px; }
.font-main .r2 {
    padding-left: 4px;
    gap: 6px;
    font-size: 7.500px;
}
.font-main .r2 b { font-weight: 700; }
.font-main .r2 .xl-caret { margin-left: -1px; }
.font-main .r2 i { transform: skewX(-12deg); }
.rb-sep {
    width: 1px;
    height: 11px;
    background: #d4d4d4;
}
.big { font-size: 9px; }
.small { font-size: 7px; margin-left: 3px; }
.big sup, .small sup { font-size: 5px; color: #3f6e96; }
.font-main .r3 {
    padding-left: 4px;
    gap: 3px;
}
.font-main .r3 .xl-caret { margin-left: 0; }
.color-btn {
    display: inline-flex;
    justify-content: center;
    width: 11px;
    height: 11px;
    font-size: 7px;
    line-height: 8px;
    border-bottom: 2px solid #000;
}
.color-btn.red { border-bottom-color: #e00; margin-left: 4px; }
.phon { font-size: 5.500px; line-height: 6px; width: 10px; margin-left: 5px; color: #3f6e96; }
.align-main { padding-left: 5px; }
.align-main .rb-row {
    gap: 2px;
}
.al {
    display: flex;
    flex-direction: column;
    justify-content: flex-start;
    gap: 2px;
    width: 13px;
    height: 13px;
    padding: 2px;
}
.al s {
    display: block;
    height: 1px;
    background: #888;
}
.al.on {
    background: #d0d0d0;
    border: 1px solid #b0b0b0;
}
.al.mid { justify-content: center; }
.al.bot { justify-content: flex-end; }
.al.h { justify-content: center; gap: 1px; }
.al.c s { margin: 0 1px; }
.al.r s:nth-child(2) { margin-left: 3px; }
.al.l s:nth-child(2) { margin-right: 3px; }
.al.ind s:nth-child(2) { margin-left: 4px; background: #3f6e96; }
.wrap {
    font-size: 4.500px;
    line-height: 5px;
    color: #3f6e96;
    margin-left: 3px;
}
.num-main .rb-row {
    gap: 5px;
    padding-left: 3px;
}
.num-main .rb-row:first-child { padding-left: 0; }
.pct { font-size: 8px; }
.num-inc {
    font-size: 5px;
    line-height: 5px;
    color: #3f6e96;
}
.style-main { padding-left: 3px; }
.sty {
    display: flex;
    align-items: center;
    gap: 2px;
    height: 13.500px;
    font-size: 8px;
    white-space: nowrap;
}
.more-box {
    width: 12px;
    height: 20px;
    margin-left: 3px;
    background: #fff;
    border: 1px solid #b9b9b9;
}
.formula {
    display: flex;
    flex: none;
    height: 55px;
    padding-top: 6px;
    align-items: flex-start;
    background: #e6e6e6;
    font-size: 9px;
    color: #555;
}
.name-box {
    display: flex;
    align-items: center;
    justify-content: space-between;
    width: 60px;
    height: 17px;
    margin-left: 2px;
    padding: 0 4px;
    background: #fff;
    border: 1px solid #d6d6d6;
}
.fx-dots {
    width: 20px;
    line-height: 17px;
    text-align: center;
    color: #999;
}
.fx-btns {
    display: flex;
    align-items: center;
    justify-content: space-around;
    width: 65px;
    height: 17px;
    background: #fff;
    border: 1px solid #d6d6d6;
    color: #aaa;
}
.fx-btns i {
    font-family: "Liberation Serif", serif;
    font-style: italic;
    color: #555;
}
.fx-input {
    flex: 1;
    height: 43px;
    margin-left: 3px;
    padding: 1px 7px;
    background: #fff;
    line-height: 13px;
    color: #666;
}
.col-heads, .cells {
    display: grid;
    grid-template-columns: 19px 47px 94px 42px 52px 45px 43px 43px 13px;
}
.sheet {
    flex: none;
    height: 154px;
    background: #fff;
    overflow: hidden;
}
.col-heads {
    height: 13px;
    background: #e6e6e6;
    border-bottom: 1px solid #bbb;
    font-size: 7.500px;
    line-height: 12px;
    text-align: center;
    color: #444;
}
.col-heads span {
    border-right: 1px solid #cfcfcf;
}
.col-heads .sel {
    background: #d2d2d2;
    color: #217346;
    font-weight: 500;
}
.cells {
    grid-auto-rows: 13.300px;
    font-size: 8.900px;
    line-height: 13px;
    color: #2b2b2b;
}
.cells span {
    padding-left: 2px;
    border-right: 1px solid #e2e2e2;
    border-bottom: 1px solid #e2e2e2;
    white-space: nowrap;
    overflow: hidden;
}
.cells .rh {
    padding: 0;
    background: #e6e6e6;
    border-right: 1px solid #bbb;
    border-bottom: 1px solid #cfcfcf;
    font-size: 7.500px;
    text-align: center;
    color: #444;
}
.cells .rh.last {
    line-height: 9px;
    font-size: 6.500px;
}
.cells .rh.sel {
    background: #d2d2d2;
    color: #217346;
}
.cells .cur {
    outline: 2px solid #217346;
    outline-offset: -2px;
}
.cells .blk {
    background: #000;
    border-color: #000;
}
.cells .nowrap {
    text-align: center;
}
.sheet-tabs {
    display: flex;
    align-items: center;
    flex: none;
    height: 16px;
    background: #e6e6e6;
    border-top: 1px solid #c8c8c8;
    font-size: 8px;
    color: #aaa;
}
.st-nav {
    width: 17px;
    text-align: center;
}
.st-nav:first-child { margin-left: 8px; }
.st-tab {
    width: 176px;
    height: 16px;
    margin-left: 17px;
    background: #fff;
    border-bottom: 2px solid #217346;
    color: #217346;
    font-size: 8px;
    line-height: 14px;
    text-align: center;
    white-space: nowrap;
    overflow: hidden;
}
.st-add {
    width: 10px;
    height: 10px;
    margin-left: 19px;
    border: 1px solid #777;
    border-radius: 50%;
    color: #555;
    font-size: 8px;
    line-height: 8px;
    text-align: center;
}
.st-dots { margin-left: 15px; color: #aaa; }
.st-scroll {
    flex: 1;
    height: 9px;
    margin-left: 8px;
    background: #fff;
    border: 1px solid #aaa;
    font-size: 6px;
    line-height: 7px;
    color: #333;
    padding-left: 1px;
}
.st-scroll span {
    display: block;
    width: 8px;
    height: 7px;
    border-right: 1px solid #aaa;
}
.status {
    display: flex;
    align-items: center;
    flex: none;
    height: 14px;
    padding-left: 5px;
    background: #f3f3f3;
    border-radius: 0 0 0 5px;
    font-size: 7.800px;
    color: #444;
    white-space: nowrap;
}
.st-macro { margin-left: 10px; }
.st-acc { margin: 0 2px 0 8px; }
.view-btns {
    display: flex;
    margin-left: auto;
}
.view-btns span {
    display: flex;
    justify-content: center;
    align-items: center;
    width: 24px;
    height: 14px;
}
.view-btns span.on {
    background: #d8d8d8;
}
.zoom-minus {
    width: 5px;
    height: 1px;
    margin-left: 3px;
    background: #555;
}
.zoom-track {
    width: 27px;
    height: 1px;
    margin-left: 3px;
    background: #777;
}
```
